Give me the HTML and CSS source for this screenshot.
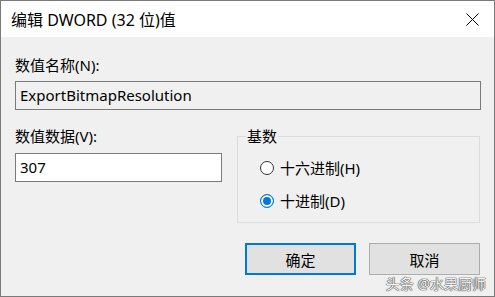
FILE: index.html
```html
<!DOCTYPE html>
<html lang="zh-CN">
<head>
    <meta charset="UTF-8">
    <title>编辑 DWORD (32 位)值</title>
    <link rel="stylesheet" href="styles.css">
</head>
<body>

<div class="dialog">
    <div class="titlebar">
        <span class="title">编辑 DWORD (32 位)值</span>
        <svg class="close" width="13" height="13" viewBox="0 0 13 13">
            <path d="M0.5 0.5 L12.5 12.5 M12.5 0.5 L0.5 12.5" stroke="#000" stroke-width="1" fill="none"/>
        </svg>
    </div>

    <div class="content">
        <div class="label">数值名称(N):</div>
        <div class="field field-readonly">ExportBitmapResolution</div>

        <div class="row">
            <div class="data-col">
                <div class="label">数值数据(V):</div>
                <div class="field field-data">307</div>
            </div>

            <fieldset class="base-group">
                <legend>基数</legend>
                <label class="radio">
                    <span class="dot"></span>十六进制(H)
                </label>
                <label class="radio">
                    <span class="dot dot-checked"></span>十进制(D)
                </label>
            </fieldset>
        </div>

        <div class="buttons">
            <button class="btn btn-default">确定</button>
            <button class="btn">取消</button>
        </div>
    </div>

    <div class="watermark">头条 @水果厨师</div>
</div>

</body>
</html>
```
FILE: styles.css
```css
body {
    margin: 0;
    background-color: #f0f0f0;
    font-family: 'Noto Sans', 'Noto Sans CJK SC', sans-serif;
    font-size: 15px;
    color: #000;
}

.dialog {
    position: relative;
    width: 493px;
    height: 295px;
    border: 1px solid #7a7a7a;
    background-color: #f0f0f0;
}

.titlebar {
    height: 36px;
    background-color: #fff;
    display: flex;
    align-items: center;
    justify-content: space-between;
    padding: 0 15px 0 10px;
}

.title {
    font-size: 16px;
}

.close {
    display: block;
}

.content {
    padding: 17px 14px 0 14px;
}

.label {
    height: 22px;
    line-height: 22px;
}

.field {
    box-sizing: border-box;
    height: 29px;
    line-height: 27px;
    border: 1px solid #7a7a7a;
    padding: 0 4px;
}

.field-readonly {
    margin-top: 5px;
    width: 466px;
    background-color: #f0f0f0;
}

.row {
    display: flex;
    align-items: flex-start;
}

.data-col {
    width: 207px;
    padding-top: 15px;
}

.field-data {
    margin-top: 6px;
    background-color: #fff;
}

.base-group {
    box-sizing: border-box;
    width: 243px;
    height: 97px;
    margin: 16px 0 0 15px;
    padding: 5px 0 0 22px;
    border: 1px solid #dcdcdc;
}

.base-group legend {
    padding: 0 1px;
    margin-left: -14px;
    line-height: 20px;
}

.radio {
    display: flex;
    align-items: center;
    height: 33px;
}

.dot {
    box-sizing: border-box;
    width: 14px;
    height: 14px;
    border: 1px solid #333;
    border-radius: 50%;
    background-color: #fff;
    margin-right: 6px;
}

.dot-checked {
    border-color: #0078d7;
    background-color: #0078d7;
    box-shadow: inset 0 0 0 2px #fff;
}

.buttons {
    display: flex;
    justify-content: flex-end;
    gap: 13px;
    margin-top: 20px;
}

.btn {
    box-sizing: border-box;
    width: 111px;
    height: 32px;
    border: 1px solid #adadad;
    background-color: #e1e1e1;
    font-family: inherit;
    font-size: 15px;
    padding: 0;
}

.btn-default {
    border: 2px solid #0078d7;
}

.watermark {
    position: absolute;
    right: 8px;
    bottom: 3px;
    font-size: 14px;
    color: #f4f4f4;
    text-shadow: 0 0 1px #444, 0 0 1px #444, 0 0 1px #444;
}
```
